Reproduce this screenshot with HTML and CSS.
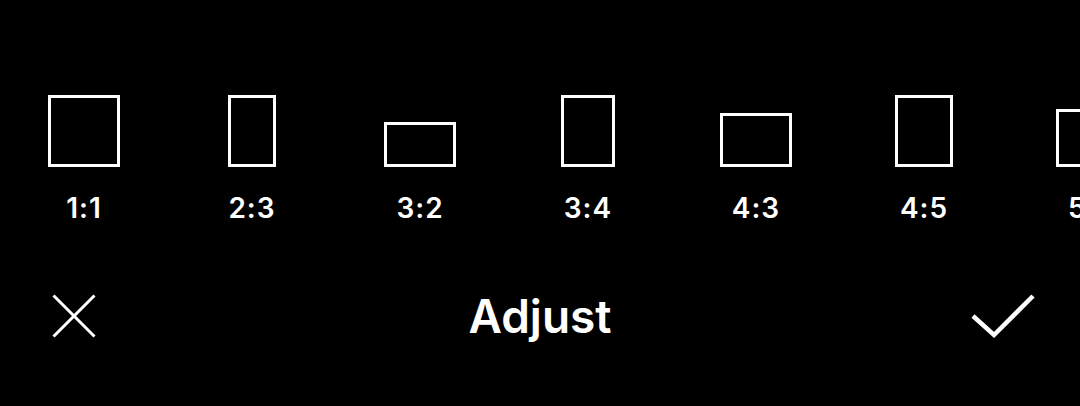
FILE: index.html
```html
<!DOCTYPE html>
<html lang="en">
<head>
    <meta charset="UTF-8">
    <meta name="viewport" content="width=device-width, initial-scale=1.0">
    <title>Adjust</title>
    <link rel="stylesheet" href="styles.css">
</head>
<body>
    <div class="ratios">
        <div class="ratio">
            <div class="frame-box"><div class="frame r1-1"></div></div>
            <p>1:1</p>
        </div>
        <div class="ratio">
            <div class="frame-box"><div class="frame r2-3"></div></div>
            <p>2:3</p>
        </div>
        <div class="ratio">
            <div class="frame-box"><div class="frame r3-2"></div></div>
            <p>3:2</p>
        </div>
        <div class="ratio">
            <div class="frame-box"><div class="frame r3-4"></div></div>
            <p>3:4</p>
        </div>
        <div class="ratio">
            <div class="frame-box"><div class="frame r4-3"></div></div>
            <p>4:3</p>
        </div>
        <div class="ratio">
            <div class="frame-box"><div class="frame r4-5"></div></div>
            <p>4:5</p>
        </div>
        <div class="ratio">
            <div class="frame-box"><div class="frame r5-4"></div></div>
            <p>5:4</p>
        </div>
    </div>

    <div class="toolbar">
        <div class="cancel">
            <svg width="44" height="44" viewBox="0 0 44 44">
                <path d="M1.5 1.5 L42.5 42.5 M42.5 1.5 L1.5 42.5" stroke="#fff" stroke-width="3" fill="none"/>
            </svg>
        </div>
        <div class="title">Adjust</div>
        <div class="done">
            <svg width="66" height="46" viewBox="0 0 66 46">
                <polyline points="3,23 24,42 63,3" stroke="#fff" stroke-width="4.5" fill="none"/>
            </svg>
        </div>
    </div>
</body>
</html>
```

FILE: styles.css
```css
body {
    margin: 0;
    background-color: #000;
    color: #fff;
    font-family: Inter, "Liberation Sans", sans-serif;
    overflow: hidden;
    width: 1080px;
    height: 406px;
}

.ratios {
    display: flex;
    padding-top: 95px;
}

.ratio {
    flex-shrink: 0;
    width: 168px;
    display: flex;
    flex-direction: column;
    align-items: center;
}

.frame-box {
    height: 72px;
    display: flex;
    align-items: flex-end;
}

.frame {
    box-sizing: border-box;
    border: 3px solid #fff;
}

.r1-1 { width: 72px; height: 72px; }
.r2-3 { width: 48px; height: 72px; }
.r3-2 { width: 72px; height: 45px; }
.r3-4 { width: 54px; height: 72px; }
.r4-3 { width: 72px; height: 54px; }
.r4-5 { width: 58px; height: 72px; }
.r5-4 { width: 72px; height: 58px; }

.ratio p {
    margin: 25px 0 0;
    font-size: 28px;
    line-height: 32px;
    font-weight: 600;
    letter-spacing: 1px;
}

/* bottom bar */
.toolbar {
    margin-top: 52px;
    height: 80px;
    display: grid;
    grid-template-columns: 1fr auto 1fr;
    align-items: center;
}

.cancel {
    padding-left: 52px;
    display: flex;
}

.title {
    font-size: 46px;
    line-height: 78px;
    font-weight: 600;
}

.done {
    justify-self: end;
    padding-right: 44px;
    display: flex;
}
```
